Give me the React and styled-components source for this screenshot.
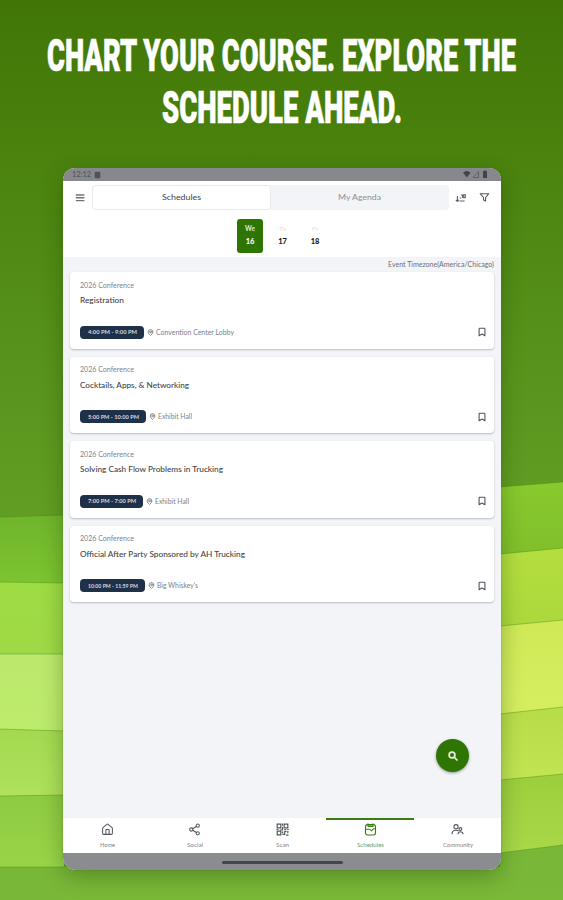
import React, { useLayoutEffect, useRef, useState } from "react";
import styled, { createGlobalStyle } from "styled-components";
import { House, Share2, Bookmark, MapPin } from "lucide-react";

const GlobalStyle = createGlobalStyle`
  * {
    box-sizing: border-box;
  }

  body {
    margin: 0;
    font-family: Lato, "Open Sans", "Liberation Sans", sans-serif;
  }
`;

const Page = styled.div`
  position: relative;
  width: 563px;
  height: 900px;
  overflow: hidden;
  padding: 30px 62px 0 63px;
  background: linear-gradient(#417607 0, #4a820d 150px, #57931b 350px, #629e24 520px);
`;

const Stripes = styled.svg`
  position: absolute;
  inset: 0;
`;

const Headline = styled.h1`
  position: relative;
  display: flex;
  flex-direction: column;
  align-items: center;
  height: 138px;
  margin: 0 -62px 0 -63px;
  color: #fff;
  font: 900 45px/52px Roboto, sans-serif;
  -webkit-text-stroke: 0.7px #fff;
`;

const Device = styled.div`
  position: relative;
  display: flex;
  flex-direction: column;
  height: 702px;
  border-radius: 12px 12px 13px 13px;
  overflow: hidden;
  background: #f2f4f8;
`;

/* Shadow sits outside the clipped device */
const DeviceShadow = styled.div`
  position: relative;
  border-radius: 13px;
  box-shadow: 0 7px 22px rgba(20, 50, 0, 0.32), 0 0 2px rgba(70, 140, 0, 0.4);
`;

const StatusBar = styled.div`
  display: flex;
  align-items: center;
  justify-content: space-between;
  height: 13px;
  padding: 0 14px 0 9px;
  background: #87888c;
  color: #505155;
`;

const StatusGroup = styled.div`
  display: flex;
  align-items: center;
  gap: 3px;
  font-size: 8px;
  line-height: 13px;
`;

const TopBar = styled.div`
  display: flex;
  align-items: center;
  height: 33px;
  padding: 0 11px 0 12px;
  background: #fff;
`;

const Tabs = styled.div`
  display: flex;
  width: 357px;
  height: 25px;
  margin: 0 6px 0 7px;
  border-radius: 4px;
  background: #f2f4f8;
`;

const Tab = styled.div`
  display: flex;
  flex: 1;
  align-items: center;
  justify-content: center;
  border: 1px solid ${({ $active }) => ($active ? "#e9eaec" : "transparent")};
  border-radius: 4px;
  background: ${({ $active }) => ($active ? "#fff" : "transparent")};
  color: ${({ $active }) => ($active ? "#404248" : "#8b8f96")};
  font-size: 7.5px;
  line-height: 10px;
`;

const TopIcons = styled.div`
  display: flex;
  align-items: center;
  gap: 13px;
`;

const Days = styled.div`
  display: flex;
  height: 43px;
  padding: 5px 0 0 174px;
  gap: 6.5px;
  background: #fff;
`;

const Day = styled.div`
  display: flex;
  flex-direction: column;
  align-items: center;
  width: 26px;
  height: 34px;
  padding-top: 5px;
  gap: 3px;
  border-radius: 3px;
  background: ${({ $active }) => ($active ? "#2f7504" : "transparent")};
  color: ${({ $active }) => ($active ? "#fff" : "#17181b")};
  font-size: 7.5px;
  font-weight: 900;
  line-height: 10px;
`;

const Weekday = styled.span`
  color: ${({ $active }) => ($active ? "#dcebd4" : "#dfe1e3")};
  font-size: 6.5px;
  font-weight: ${({ $active }) => ($active ? 700 : 400)};
`;

const Content = styled.div`
  position: relative;
  flex: 1;
  padding: 0 7px;
`;

const Timezone = styled.div`
  display: flex;
  justify-content: flex-end;
  height: 15px;
  color: #6d7076;
  font-size: 7px;
  line-height: 15px;
`;

const CardList = styled.div`
  display: flex;
  flex-direction: column;
  gap: 8px;
`;

const Card = styled.div`
  height: 76.6px;
  padding: 7.5px 7px 0 10px;
  border-radius: 4px;
  background: #fff;
  box-shadow: 0 1px 2px rgba(40, 45, 60, 0.28);
`;

const Track = styled.div`
  color: #7e8288;
  font-size: 6.8px;
  line-height: 10px;
`;

const Title = styled.div`
  margin-top: 5.5px;
  color: #404348;
  font-size: 7.7px;
  font-weight: 500;
  line-height: 11px;
`;

const CardFooter = styled.div`
  display: flex;
  align-items: center;
  margin-top: 19px;
  height: 14px;
`;

const TimePill = styled.div`
  display: flex;
  align-items: center;
  justify-content: center;
  width: ${({ $width }) => $width}px;
  height: 13px;
  border-radius: 4px;
  background: #1f3049;
  color: #d3d9e0;
  font-size: 6px;
  font-weight: 700;
  line-height: 8px;
`;

const Place = styled.div`
  display: flex;
  flex: 1;
  align-items: center;
  gap: 2px;
  padding-left: 3px;
  color: #7b7f85;
  font-size: 6.8px;
  line-height: 9px;
`;

const SearchButton = styled.button`
  position: absolute;
  right: 32px;
  bottom: 46px;
  display: flex;
  align-items: center;
  justify-content: center;
  width: 33px;
  height: 33px;
  padding: 0;
  border: 0;
  border-radius: 50%;
  background: #2f7504;
  color: #e5f0de;
  box-shadow: 0 1px 3px rgba(0, 0, 0, 0.4);
`;

const Nav = styled.div`
  display: flex;
  height: 35px;
  padding-left: 0.5px;
  margin-right: -0.5px;
  background: #fff;
`;

const NavItem = styled.div`
  display: flex;
  flex: 1;
  flex-direction: column;
  align-items: center;
  gap: 3.5px;
  padding-top: 3px;
  border-top: 2px solid ${({ $active }) => ($active ? "#3b7a12" : "transparent")};
  color: ${({ $active }) => ($active ? "#3b7a12" : "#53575c")};
`;

const NavLabel = styled.span`
  opacity: 0.75;
  font-size: 5.8px;
  line-height: 9px;
`;

const GestureBar = styled.div`
  display: flex;
  justify-content: center;
  height: 17px;
  padding-top: 8px;
  background: #8b8c90;
`;

const GestureHandle = styled.div`
  width: 121px;
  height: 2.5px;
  border-radius: 2px;
  background: #44474a;
`;

const FitBox = styled.span`
  display: block;
  width: ${({ $width }) => $width}px;
  white-space: nowrap;
`;

const FitInner = styled.span`
  display: inline-block;
  transform-origin: left center;
`;

// Scales a single line horizontally until it fills the given width
const FitText = ({ width, children }) => {
  const ref = useRef(null);
  const [scale, setScale] = useState(1);

  useLayoutEffect(() => {
    setScale(width / parseFloat(getComputedStyle(ref.current).width));
  }, [width, children]);

  return (
    <FitBox $width={width}>
      <FitInner ref={ref} style={{ transform: `scaleX(${scale})` }}>
        {children}
      </FitInner>
    </FitBox>
  );
};

const leftBands = [
  { y: [517, 515], from: "#70b52b", to: "#7fc632" },
  { y: [582, 583], from: "#9edc43", to: "#a0d947" },
  { y: [654, 654], from: "#bce96c", to: "#bdeb6b" },
  { y: [729, 731], from: "#a3d950", to: "#b1e25d" },
  { y: [796, 795], from: "#8eca42", to: "#9ad548" },
  { y: [867, 867], from: "#79b738", to: "#7ab838" },
];

const rightBands = [
  { y: [487, 482], from: "#88c92d", to: "#80be2b" },
  { y: [554, 548], from: "#b4de3e", to: "#acd83d" },
  { y: [626, 620], from: "#cfe957", to: "#d4ee60" },
  { y: [714, 707], from: "#b9dd49", to: "#c2e654" },
  { y: [780, 774], from: "#9dcf3d", to: "#a9d848" },
  { y: [853, 845], from: "#79b738", to: "#7ab838" },
];

const Band = ({ id, x, band }) => (
  <g>
    <linearGradient id={id} x1="0" y1={band.y[0]} x2="0" y2={band.y[0] + 75} gradientUnits="userSpaceOnUse">
      <stop offset="0" stopColor={band.from} />
      <stop offset="1" stopColor={band.to} />
    </linearGradient>
    <path d={`M${x[0]} ${band.y[0]}L${x[1]} ${band.y[1]}V900H${x[0]}Z`} fill={`url(#${id})`} />
    <path d={`M${x[0]} ${band.y[0]}L${x[1]} ${band.y[1]}`} stroke="#3c8510" strokeOpacity=".38" />
  </g>
);

const Background = () => (
  <Stripes width="563" height="900">
    {leftBands.map((band, i) => (
      <Band key={i} id={`left${i}`} x={[0, 64]} band={band} />
    ))}
    {rightBands.map((band, i) => (
      <Band key={i} id={`right${i}`} x={[500, 563]} band={band} />
    ))}
    <path d="M64 867H501V900H64Z" fill="#7ab838" />
  </Stripes>
);

const MenuIcon = () => (
  <svg width="10" height="10" viewBox="0 0 10 10" stroke="#707378" strokeWidth="1.4">
    <path d="M.8 2h8.6M.8 4.8h8.6M.8 7.6h8.6" />
  </svg>
);

const SortIcon = () => (
  <svg width="11" height="10" viewBox="0 0 11 10" fill="none" stroke="#606369" strokeWidth="1.1">
    <path d="M2.4 3v5.4M.8 6.8l1.6 1.6L4 6.8M4.6 5h1.6M4.6 8h5" />
    <path d="M6 2h1.5v3M8.7 1.8h1.6v3H8.7z" />
  </svg>
);

const FilterIcon = () => (
  <svg width="11" height="11" viewBox="0 0 11 11" fill="none" stroke="#585b61" strokeWidth="1.1" strokeLinejoin="round">
    <path d="M1.2 1.7h8.6L6.6 5.5v3.4L4.5 8V5.5z" />
  </svg>
);

const SearchIcon = () => (
  <svg width="12" height="12" viewBox="0 0 12 12" fill="none" stroke="currentColor" strokeWidth="1.7">
    <circle cx="5" cy="5" r="2.9" />
    <path d="M7.1 7.1l3.4 3.4" />
  </svg>
);

const SignalIcons = () => (
  <svg width="24" height="9" viewBox="0 0 24 9" fill="#434448">
    <path d="M0 2.5Q3.8-.6 7.6 2.5L3.8 7.5z" />
    <path d="M10 7.5L15.5 1.5V7.5z" fill="none" stroke="#5d5e62" strokeWidth=".9" />
    <path d="M20 1h1V.5h2V1h1v7h-4z" />
  </svg>
);

const QrIcon = () => (
  <svg width="13" height="13" viewBox="0 0 13 13" fill="none" stroke="currentColor" strokeWidth="1.2">
    <path d="M1.2 1.2h3.6v3.6H1.2zM8.2 1.2h3.6v3.6H8.2zM1.2 8.2h3.6v3.6H1.2z" />
    <path d="M6.5.5v2.2M6.5 4v3H4M.5 6.5h2M8.3 6.5h2M11.2 6.5h1.5M6.5 8.5v1.7M6.5 11.3h2.2V8.3h1.8M11.8 8v2.3M10 12.2h2.5" />
  </svg>
);

const ScheduleIcon = () => (
  <svg width="13" height="13" viewBox="0 0 13 13" fill="none" stroke="currentColor" strokeWidth="1.1">
    <rect x="1.5" y="1.6" width="10" height="10.4" rx="2.2" />
    <path d="M4 .5v1.8M9 .5v1.8M3.5 3.2h6" strokeWidth="1.4" />
    <path d="M1.5 6.2h4.2l1.6 1.6 2.2-2h2" />
  </svg>
);

const CommunityIcon = () => (
  <svg width="13" height="13" viewBox="0 0 13 13" fill="none" stroke="currentColor" strokeWidth="1.1">
    <circle cx="5" cy="3.7" r="2.1" />
    <path d="M1 11.2c0-2.8 1.5-4 4-4 1.2 0 2 .3 2.6.8" />
    <circle cx="9.4" cy="6" r="1.4" />
    <path d="M6.9 11.2c.2-1.8 1-2.5 2.5-2.5s2.5.7 2.7 2.5" />
  </svg>
);

const sessions = [
  { title: "Registration", titleWidth: 44, time: "4:00 PM - 9:00 PM", pill: 64, place: "Convention Center Lobby", placeWidth: 78 },
  { title: "Cocktails, Apps, & Networking", titleWidth: 109, time: "5:00 PM - 10:00 PM", pill: 66, place: "Exhibit Hall", placeWidth: 34 },
  { title: "Solving Cash Flow Problems in Trucking", titleWidth: 143, time: "7:00 PM - 7:00 PM", pill: 63, place: "Exhibit Hall", placeWidth: 34 },
  { title: "Official After Party Sponsored by AH Trucking", titleWidth: 165, time: "10:00 PM - 11:59 PM", pill: 65, place: "Big Whiskey's", placeWidth: 41 },
];

const navItems = [
  { label: "Home", width: 15, icon: <House size={13} strokeWidth={1.9} /> },
  { label: "Social", width: 16, icon: <Share2 size={13} strokeWidth={1.9} /> },
  { label: "Scan", width: 13, icon: <QrIcon /> },
  { label: "Schedules", width: 27, icon: <ScheduleIcon />, active: true },
  { label: "Community", width: 30, icon: <CommunityIcon /> },
];

const SessionCard = ({ session }) => (
  <Card>
    <Track>
      <FitText width={54}>2026 Conference</FitText>
    </Track>
    <Title>
      <FitText width={session.titleWidth}>{session.title}</FitText>
    </Title>
    <CardFooter>
      <TimePill $width={session.pill}>
        <FitText width={session.pill - 15}>{session.time}</FitText>
      </TimePill>
      <Place>
        <MapPin size={7} strokeWidth={3} />
        <FitText width={session.placeWidth}>{session.place}</FitText>
      </Place>
      <Bookmark size={10} strokeWidth={2.6} color="#505358" />
    </CardFooter>
  </Card>
);

const App = () => (
  <Page>
    <GlobalStyle />
    <Background />
    <Headline>
      <FitText width={469}>CHART YOUR COURSE. EXPLORE THE</FitText>
      <FitText width={240}>SCHEDULE AHEAD.</FitText>
    </Headline>
    <DeviceShadow>
      <Device>
        <StatusBar>
          <StatusGroup>
            <FitText width={19}>12:12</FitText>
            <svg width="7" height="8" viewBox="0 0 7 8">
              <rect x=".7" y=".7" width="5.6" height="6.6" rx="1.4" fill="#505155" />
            </svg>
          </StatusGroup>
          <SignalIcons />
        </StatusBar>
        <TopBar>
          <MenuIcon />
          <Tabs>
            <Tab $active>
              <FitText width={39}>Schedules</FitText>
            </Tab>
            <Tab>
              <FitText width={43}>My Agenda</FitText>
            </Tab>
          </Tabs>
          <TopIcons>
            <SortIcon />
            <FilterIcon />
          </TopIcons>
        </TopBar>
        <Days>
          <Day $active>
            <Weekday $active>We</Weekday>16
          </Day>
          <Day>
            <Weekday>Th</Weekday>17
          </Day>
          <Day>
            <Weekday>Fr</Weekday>18
          </Day>
        </Days>
        <Content>
          <Timezone>
            <FitText width={106}>Event Timezone(America/Chicago)</FitText>
          </Timezone>
          <CardList>
            {sessions.map((session) => (
              <SessionCard key={session.title} session={session} />
            ))}
          </CardList>
          <SearchButton aria-label="Search">
            <SearchIcon />
          </SearchButton>
        </Content>
        <Nav>
          {navItems.map((item) => (
            <NavItem key={item.label} $active={item.active}>
              {item.icon}
              <NavLabel>
                <FitText width={item.width}>{item.label}</FitText>
              </NavLabel>
            </NavItem>
          ))}
        </Nav>
        <GestureBar>
          <GestureHandle />
        </GestureBar>
      </Device>
    </DeviceShadow>
  </Page>
);

export default App;
